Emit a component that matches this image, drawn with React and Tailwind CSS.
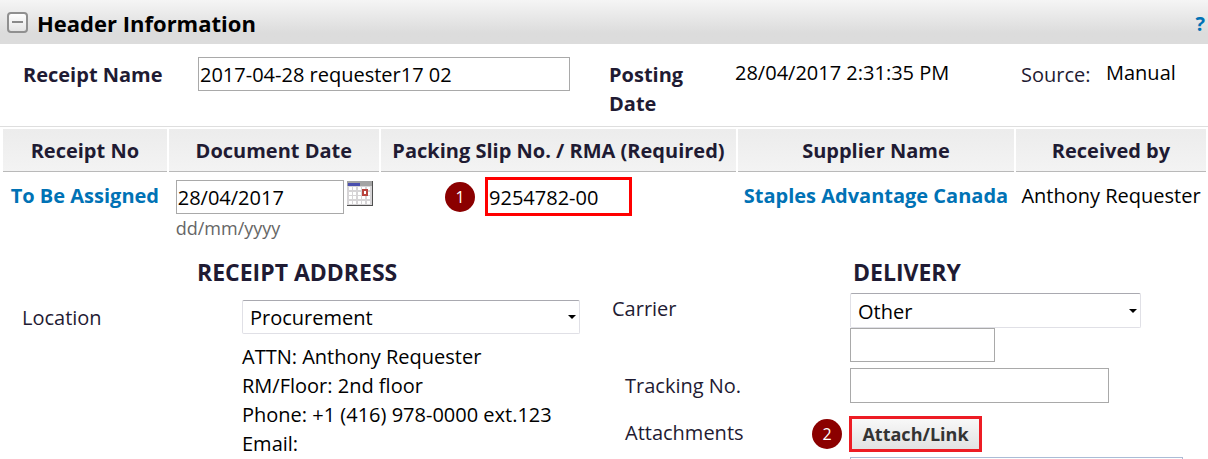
import React, { useState } from 'react';

const COLUMNS = ['Receipt No', 'Document Date', 'Packing Slip No. / RMA (Required)', 'Supplier Name', 'Received by'];

const inputClass = 'block border border-[#a9a9a9] bg-white px-px text-[20px] leading-[32px] text-black';

function StepBadge({ children }) {
  return (
    <span className="flex h-[30px] w-[30px] shrink-0 items-center justify-center rounded-full bg-[#8b0000] text-[16px] leading-[30px] text-white">
      {children}
    </span>
  );
}

function CalendarIcon() {
  return (
    <svg width="26" height="25" viewBox="0 0 26 25" shapeRendering="crispEdges">
      <rect width="26" height="25" fill="#505050" />
      <rect width="25" height="24" fill="#d6d4d6" />
      <rect width="25" height="5" fill="#a3a3a3" />
      <rect x="1" y="2" width="12" height="3" fill="#4a4fae" />
      {[6, 11, 15, 20].map((y) =>
        [2, 6, 11, 15, 20].map((x) => <rect key={`${x}-${y}`} x={x} y={y} width="3" height="3" fill="#fff" />)
      )}
      <rect x="15" y="8" width="6" height="7" fill="#b8443e" />
      <rect x="17" y="10" width="2" height="3" fill="#fff" />
    </svg>
  );
}

function Select({ id, options, className }) {
  return (
    <div className={`relative ${className}`}>
      <select
        id={id}
        className="block h-full w-full appearance-none rounded-[2px] border border-[#e0e0e6] border-t-[#a9a9b0] bg-white pl-[7px] pt-px text-[20px] text-black"
      >
        {options.map((o) => (
          <option key={o}>{o}</option>
        ))}
      </select>
      <svg className="pointer-events-none absolute right-[4px] top-1/2 -translate-y-1/2" width="8" height="4" viewBox="0 0 8 4">
        <path d="M0 0h8L4 4z" fill="#000" />
      </svg>
    </div>
  );
}

export default function App() {
  const [open, setOpen] = useState(true);

  return (
    <div className="h-screen overflow-hidden bg-white font-['Open_Sans',sans-serif] text-[20px] leading-[29px] text-black">
      <header className="flex h-[44px] items-center bg-linear-to-b from-[#f5f5f5] to-[#dcdcdc] to-75% pl-[7px] pr-[3px]">
        <button
          type="button"
          aria-label="Toggle section"
          onClick={() => setOpen(!open)}
          className="flex h-[21px] w-[21px] items-center justify-center rounded-[4px] border-2 border-[#909090] bg-linear-to-b from-white to-[#e4e4e4]"
        >
          <span className="h-[2px] w-[11px] bg-[#8a8a8a]" />
        </button>
        <h1 className="ml-[9px] pt-[3px] text-[22px] font-bold">Header Information</h1>
        <a href="#help" className="ml-auto pt-[2px] text-[20px] font-bold text-[#0072b5]">
          ?
        </a>
      </header>

      {open && (
        <main>
          <div className="flex h-[82px] items-start text-[#1f1b33]">
            <div className="flex w-1/2 pl-[23px] pt-[13px]">
              <label htmlFor="name" className="w-[175px] pt-[3px] font-bold">
                Receipt Name
              </label>
              <input id="name" defaultValue="2017-04-28 requester17 02" className={`${inputClass} h-[34px] w-[372px]`} />
            </div>
            <div className="flex w-1/2 pl-[5px] pt-[14px]">
              <span className="w-[126px] pr-[30px] pt-[2px] font-bold">Posting Date</span>
              <span className="w-[286px] text-black">28/04/2017 2:31:35 PM</span>
              <span className="w-[85px] pt-[2px]">Source:</span>
              <span className="text-black">Manual</span>
            </div>
          </div>

          <div className="border-t border-[#dedede] pl-px">
            <table className="w-full table-fixed border-separate border-spacing-x-[2px] border-spacing-y-0 pt-[2px]">
              <colgroup>
                <col className="w-[13.7%]" />
                <col className="w-[17.6%]" />
                <col className="w-[29.7%]" />
                <col className="w-[23.1%]" />
                <col />
              </colgroup>
              <thead>
                <tr>
                  {COLUMNS.map((c) => (
                    <th
                      key={c}
                      className="h-[43px] whitespace-nowrap border-b border-[#b9b9b9] bg-linear-to-b from-[#ececec] to-[#f3f3f3] p-0 font-bold text-[#1f1b33]"
                    >
                      {c}
                    </th>
                  ))}
                </tr>
              </thead>
              <tbody>
                <tr className="h-[78px] align-top">
                  <td className="whitespace-nowrap pt-[9px] text-center">
                    <a href="#receipt" className="font-bold text-[#0072b5]">
                      To Be Assigned
                    </a>
                  </td>
                  <td className="pl-[7px] pt-[8px]">
                    <div className="flex gap-[3px]">
                      <input
                        aria-label="Document Date"
                        defaultValue="28/04/2017"
                        className={`${inputClass} h-[34px] w-[168px]`}
                      />
                      <button type="button" aria-label="Pick a date" className="h-[26px] pt-px">
                        <CalendarIcon />
                      </button>
                    </div>
                    <div className="text-[18px] leading-[28px] text-[#666]">dd/mm/yyyy</div>
                  </td>
                  <td className="pl-[64px] pt-[5px]">
                    <div className="flex items-center gap-[10px]">
                      <StepBadge>1</StepBadge>
                      <input
                        aria-label="Packing Slip No. / RMA"
                        defaultValue="9254782-00"
                        className="block h-[39px] w-[147px] border-[3px] border-[#f00] bg-white px-px pt-[2px] text-[20px] text-black"
                      />
                    </div>
                  </td>
                  <td className="whitespace-nowrap pt-[9px] text-center">
                    <a href="#supplier" className="font-bold text-[#0072b5]">
                      Staples Advantage Canada
                    </a>
                  </td>
                  <td className="whitespace-nowrap pt-[9px] text-center">Anthony Requester</td>
                </tr>
              </tbody>
            </table>
          </div>

          <div className="grid grid-cols-2 pt-[7px] text-[#1f1b33]">
            <section className="pl-[22px]">
              <h2 className="pl-[175px] text-[23px] font-bold leading-[30px]">RECEIPT ADDRESS</h2>
              <div className="flex pt-[13px]">
                <label htmlFor="location" className="w-[220px] pt-[3px]">
                  Location
                </label>
                <div>
                  <Select id="location" options={['Procurement']} className="h-[34px] w-[338px]" />
                  <address className="pt-[8px] not-italic text-black">
                    <p>ATTN: Anthony Requester</p>
                    <p>RM/Floor: 2nd floor</p>
                    <p>Phone: +1 (416) 978-0000 ext.123</p>
                    <p>Email:</p>
                  </address>
                </div>
              </div>
            </section>

            <section className="pl-[8px]">
              <h2 className="pl-[241px] text-[23px] font-bold leading-[30px]">DELIVERY</h2>
              <div className="flex pt-[6px]">
                <label htmlFor="carrier" className="w-[238px] pt-px">
                  Carrier
                </label>
                <div>
                  <Select id="carrier" options={['Other']} className="h-[35px] w-[291px]" />
                  <input aria-label="Other carrier" className={`${inputClass} h-[34px] w-[145px]`} />
                </div>
              </div>
              <div className="flex pl-[13px] pt-[6px]">
                <label htmlFor="tracking" className="w-[225px] pt-[3px]">
                  Tracking No.
                </label>
                <input id="tracking" className={`${inputClass} h-[35px] w-[259px]`} />
              </div>
              <div className="flex pl-[13px] pt-[13px]">
                <span className="w-[187px] pt-[2px]">Attachments</span>
                <div className="flex items-center gap-[7px]">
                  <StepBadge>2</StepBadge>
                  <button
                    type="button"
                    className="h-[36px] w-[133px] border-[3px] border-[#ed1c24] bg-linear-to-b from-[#f8f8f8] to-[#e2e2e2] text-[18px] font-bold leading-[28px] text-[#333]"
                  >
                    Attach/Link
                  </button>
                </div>
              </div>
              <textarea
                aria-label="Attachment list"
                className="ml-[238px] mt-[5px] block h-[60px] w-[333px] resize-none border border-[#abbcd6]"
              />
            </section>
          </div>
        </main>
      )}
    </div>
  );
}
